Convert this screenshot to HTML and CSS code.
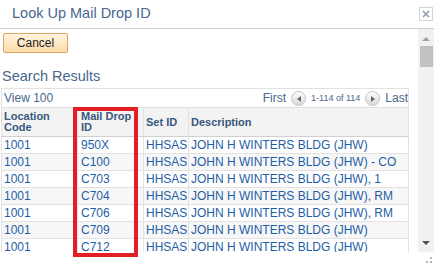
FILE: index.html
```html
<!DOCTYPE html>
<html lang="en">
<head>
    <meta charset="UTF-8">
    <title>Look Up Mail Drop ID</title>
    <link rel="stylesheet" href="styles.css">
</head>
<body>
    <div class="dialog">
        <div class="titlebar">
            <span class="title">Look Up Mail Drop ID</span>
            <span class="close">
                <svg width="8" height="8" viewBox="0 0 8 8"><path d="M1 1L7 7M7 1L1 7" stroke="#8f9fb3" stroke-width="1.6"/></svg>
            </span>
        </div>

        <div class="main">
            <div class="pane">
                <button class="cancel-btn">Cancel</button>
                <h2 class="section">Search Results</h2>

                <table class="grid">
                    <colgroup>
                        <col class="c1">
                        <col class="c2">
                        <col class="c3">
                        <col>
                    </colgroup>
                    <tr class="nav">
                        <td colspan="4">
                            <div class="nav-row">
                                <span>View 100</span>
                                <span class="pager">
                                    First
                                    <span class="round-btn"><svg width="4" height="6" viewBox="0 0 4 6"><path d="M4 0L0 3L4 6Z" fill="#666"/></svg></span>
                                    <span class="count">1-114 of 114</span>
                                    <span class="round-btn"><svg width="4" height="6" viewBox="0 0 4 6"><path d="M0 0L4 3L0 6Z" fill="#666"/></svg></span>
                                    Last
                                </span>
                            </div>
                        </td>
                    </tr>
                    <tr class="head">
                        <th>Location<br>Code</th>
                        <th class="id-col">Mail Drop<br>ID</th>
                        <th>Set ID</th>
                        <th>Description</th>
                    </tr>
                    <tr><td>1001</td><td class="id-col">950X</td><td>HHSAS</td><td>JOHN H WINTERS BLDG (JHW)</td></tr>
                    <tr><td>1001</td><td class="id-col">C100</td><td>HHSAS</td><td>JOHN H WINTERS BLDG (JHW) - CO</td></tr>
                    <tr><td>1001</td><td class="id-col">C703</td><td>HHSAS</td><td>JOHN H WINTERS BLDG (JHW), 1</td></tr>
                    <tr><td>1001</td><td class="id-col">C704</td><td>HHSAS</td><td>JOHN H WINTERS BLDG (JHW), RM</td></tr>
                    <tr><td>1001</td><td class="id-col">C706</td><td>HHSAS</td><td>JOHN H WINTERS BLDG (JHW), RM</td></tr>
                    <tr><td>1001</td><td class="id-col">C709</td><td>HHSAS</td><td>JOHN H WINTERS BLDG (JHW)</td></tr>
                    <tr><td>1001</td><td class="id-col">C712</td><td>HHSAS</td><td>JOHN H WINTERS BLDG (JHW)</td></tr>
                </table>
            </div>

            <div class="vscroll">
                <span class="arrow-up"></span>
                <span class="thumb"></span>
                <span class="arrow-down"></span>
            </div>
        </div>

        <div class="footer">
            <svg class="grip" width="6" height="6" viewBox="0 0 6 6">
                <rect x="4" y="0" width="2" height="2" fill="#b5b5b5"/>
                <rect x="0" y="4" width="2" height="2" fill="#b5b5b5"/>
                <rect x="4" y="4" width="2" height="2" fill="#b5b5b5"/>
            </svg>
        </div>

        <!-- red annotation around the Mail Drop ID column -->
        <div class="highlight"></div>
    </div>
</body>
</html>
```

FILE: styles.css
```css
body {
    margin: 0;
    font-family: "Liberation Sans", Arial, sans-serif;
    background: white;
}
.dialog {
    position: relative;
    width: 434px;
    height: 272px;
}
.titlebar {
    height: 28px;
    border-bottom: 1px solid #cfcfcf;
    display: flex;
    align-items: center;
    justify-content: space-between;
    padding-left: 12px;
    padding-right: 1px;
}
.title {
    font-size: 14.5px;
    color: #48678c;
    margin-top: -2px;
}
.close {
    width: 12px;
    height: 12px;
    border: 1px solid #d4d4d4;
    display: flex;
    align-items: center;
    justify-content: center;
    margin-top: -1px;
}
.main {
    display: flex;
    height: 223px;
}
.pane {
    width: 418px;
    overflow: hidden;
}
.cancel-btn {
    display: block;
    margin: 4px 0 0 3px;
    width: 65px;
    height: 20px;
    padding: 0;
    font-family: inherit;
    font-size: 12px;
    color: #222;
    background: linear-gradient(#fff4e0, #fcdcaa);
    border: 1px solid #e2a35e;
    border-radius: 2px;
}
.section {
    margin: 15px 0 4px 2px;
    font-size: 14.5px;
    font-weight: normal;
    line-height: 16px;
    color: #48678c;
}
.grid {
    margin-left: 1px;
    width: 408px;
    border-collapse: collapse;
    font-size: 12px;
    table-layout: fixed;
}
.grid .c1 { width: 76px; }
.grid .c2 { width: 66px; }
.grid .c3 { width: 45px; }
.grid td, .grid th {
    border: 1px solid #e2e2e2;
    padding: 0 0 0 2px;
    text-align: left;
    white-space: nowrap;
    overflow: hidden;
}
.grid .id-col {
    padding-left: 3px;
}
.grid td {
    height: 16px;
    line-height: 16px;
    color: #1f5ea6;
}
.grid tr:nth-child(even) td {
    background: #f7f7f7;
}
.grid .nav td {
    background: white;
    height: 18px;
    color: #48678c;
    padding-right: 0;
}
.nav-row {
    display: flex;
    justify-content: space-between;
    align-items: center;
}
.pager {
    display: flex;
    align-items: center;
    color: #48678c;
}
.round-btn {
    width: 13px;
    height: 13px;
    border-radius: 50%;
    border: 1px solid #c4c4c4;
    background: linear-gradient(#fdfdfd, #d9d9d9);
    display: inline-flex;
    align-items: center;
    justify-content: center;
    margin: 1px 5px 0 5px;
}
.count {
    font-size: 9px;
}
.grid .head th {
    background: #f3f3f3;
    height: 28px;
    font-size: 11px;
    line-height: 11px;
    color: #37587f;
    border-bottom-color: #d0d0d0;
}
.vscroll {
    width: 16px;
    background: #f1f1f1;
    position: relative;
}
.arrow-up {
    position: absolute;
    top: 8px;
    left: 4px;
    border: 4px solid transparent;
    border-bottom: 4px solid #a3a3a3;
    border-top: 0;
}
.thumb {
    position: absolute;
    top: 17px;
    left: 2px;
    width: 13px;
    height: 21px;
    background: #c1c1c1;
}
.arrow-down {
    position: absolute;
    bottom: 7px;
    left: 4px;
    border: 4px solid transparent;
    border-top: 4px solid #505050;
    border-bottom: 0;
}
.footer {
    height: 20px;
    display: flex;
    justify-content: flex-end;
    align-items: flex-start;
}
.grip {
    margin: 5px 2px 0 0;
}
.highlight {
    position: absolute;
    left: 73px;
    top: 107px;
    width: 57px;
    height: 142px;
    border: 4px solid #e31e24;
}
```
